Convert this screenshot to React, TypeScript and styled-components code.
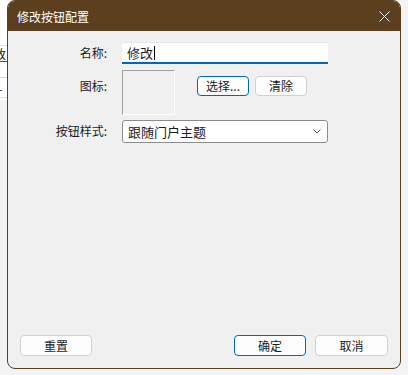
import styled, { createGlobalStyle } from 'styled-components'

const GlobalStyle = createGlobalStyle`
  html, body {
    margin: 0;
    padding: 0;
    background: #f3f3f3;
  }
  body {
    font-family: "Noto Sans CJK SC", "Noto Sans", sans-serif;
    font-size: 12px;
    color: #1b1b1b;
  }
`

const Page = styled.div`
  width: 408px;
  height: 375px;
  display: flex;
  overflow: hidden;
`

const BehindStrip = styled.div`
  width: 7px;
  flex-shrink: 0;
  height: 100px;
  background: #fff;
  overflow: hidden;
  display: flex;
  flex-direction: column;
  padding-top: 45px;
  box-sizing: border-box;
`

const BehindInput = styled.div`
  height: 17px;
  box-sizing: border-box;
  border-top: 1px solid #e2e2e2;
  border-bottom: 1px solid #0067c0;
  display: flex;
  justify-content: flex-end;
  align-items: center;
  font-size: 12px;
  line-height: 14px;
  span {
    margin-right: 1px;
  }
`

const BehindLine = styled.div<{ $top: number }>`
  margin-top: ${p => p.$top}px;
  height: 1px;
  background: #d6d6d6;
`

const BehindDot = styled.div`
  margin-top: 12px;
  width: 2px;
  height: 1px;
  background: #2a4aa0;
`

const Dialog = styled.div`
  width: 394px;
  height: 369px;
  box-sizing: border-box;
  border: 1px solid #5b3f1f;
  border-radius: 8px;
  overflow: hidden;
  display: flex;
  flex-direction: column;
  background: #f0f0f0;
`

const TitleBar = styled.div`
  height: 30px;
  flex-shrink: 0;
  background: #5b3f1f;
  color: #fff;
  display: flex;
  align-items: center;
  justify-content: space-between;
  padding: 0 9px 0 9px;
  font-size: 12px;
`

const CloseButton = styled.div`
  width: 12px;
  height: 12px;
  display: flex;
  align-items: center;
  justify-content: center;
  margin-right: 1px;
`

const Body = styled.div`
  flex: 1;
  display: flex;
  flex-direction: column;
  padding: 11px 12px 12px 0;
`

const Form = styled.div`
  display: grid;
  grid-template-columns: 99px 206px;
  grid-template-rows: 23px 45px 23px;
  column-gap: 15px;
  row-gap: 5px;
`

const Label = styled.div<{ $top?: number }>`
  text-align: right;
  height: 22px;
  line-height: 22px;
  padding-top: ${p => p.$top ?? 0}px;
`

const TextInput = styled.div`
  height: 22px;
  box-sizing: border-box;
  background: #fff;
  border-top: 1px solid #e6e6e6;
  border-bottom: 2px solid #0067c0;
  display: flex;
  align-items: center;
  padding-left: 5px;
  font-size: 13px;
`

const Caret = styled.span`
  display: inline-block;
  width: 1px;
  height: 14px;
  background: #000;
  margin-left: 1px;
`

const IconRow = styled.div`
  display: flex;
  align-items: flex-start;
`

const IconBox = styled.div`
  width: 53px;
  height: 45px;
  box-sizing: border-box;
  border-top: 1px solid #a0a0a0;
  border-left: 1px solid #a0a0a0;
  border-right: 1px solid #fff;
  border-bottom: 1px solid #fff;
  margin-right: 22px;
`

const Button = styled.div<{ $w: number; $primary?: boolean }>`
  width: ${p => p.$w}px;
  height: 20px;
  box-sizing: border-box;
  border: 1px solid ${p => (p.$primary ? '#0067c0' : '#d0d0d0')};
  border-radius: 4px;
  background: #fdfdfd;
  display: flex;
  align-items: center;
  justify-content: center;
  font-size: 12px;
  line-height: 1;
`

const Buttons = styled.div`
  display: flex;
  gap: 6px;
  margin-top: 6px;
`

const Select = styled.div`
  height: 23px;
  box-sizing: border-box;
  background: #fff;
  border: 1px solid #8c8c8c;
  border-radius: 3px;
  display: flex;
  align-items: center;
  justify-content: space-between;
  padding: 0 6px 0 5px;
  font-size: 13px;
`

const Footer = styled.div`
  margin-top: auto;
  display: flex;
  justify-content: space-between;
  padding-left: 12px;
`

const FooterRight = styled.div`
  display: flex;
  gap: 9px;
`

const FooterButton = styled(Button)`
  height: 21px;
`

export default function App() {
  return (
    <>
      <GlobalStyle />
      <Page>
        <BehindStrip>
          <BehindInput>
            <span>改</span>
          </BehindInput>
          <BehindLine $top={15} />
          <BehindDot />
          <BehindLine $top={6} />
        </BehindStrip>
        <Dialog>
          <TitleBar>
            <span>修改按钮配置</span>
            <CloseButton>
              <svg width="11" height="11" viewBox="0 0 11 11">
                <path d="M0.5 0.5 L10.5 10.5 M10.5 0.5 L0.5 10.5" stroke="#fff" strokeWidth="1" fill="none" />
              </svg>
            </CloseButton>
          </TitleBar>
          <Body>
            <Form>
              <Label>名称:</Label>
              <TextInput>
                修改<Caret />
              </TextInput>
              <Label $top={5}>图标:</Label>
              <IconRow>
                <IconBox />
                <Buttons>
                  <Button $w={52} $primary>选择...</Button>
                  <Button $w={52}>清除</Button>
                </Buttons>
              </IconRow>
              <Label>按钮样式:</Label>
              <Select>
                <span>跟随门户主题</span>
                <svg width="8" height="5" viewBox="0 0 8 5">
                  <path d="M0.5 0.5 L4 4 L7.5 0.5" stroke="#5c5c5c" strokeWidth="1" fill="none" />
                </svg>
              </Select>
            </Form>
            <Footer>
              <FooterButton $w={72}>重置</FooterButton>
              <FooterRight>
                <FooterButton $w={72} $primary>确定</FooterButton>
                <FooterButton $w={73}>取消</FooterButton>
              </FooterRight>
            </Footer>
          </Body>
        </Dialog>
      </Page>
    </>
  )
}
